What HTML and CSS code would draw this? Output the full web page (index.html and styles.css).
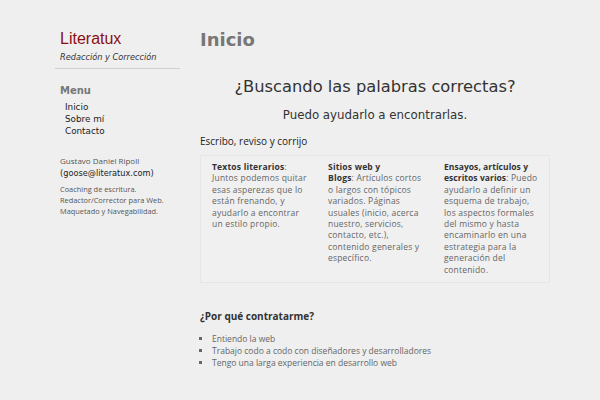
FILE: index.html
```html
<!DOCTYPE html>
<html lang="es">
<head>
<meta charset="utf-8">
<title>Literatux</title>
<link rel="stylesheet" href="styles.css">
</head>
<body>
<div class="page">
  <aside class="sidebar">
    <div class="brand">
      <div class="site-title">Literatux</div>
      <div class="tagline">Redacción y Corrección</div>
    </div>
    <h3 class="menu-title">Menu</h3>
    <ul class="menu">
      <li>Inicio</li>
      <li>Sobre mí</li>
      <li>Contacto</li>
    </ul>
    <div class="author">Gustavo Daniel Ripoll</div>
    <div class="email">(goose@literatux.com)</div>
    <p class="about">Coaching de escritura.<br>Redactor/Corrector para Web.<br>Maquetado y Navegabilidad.</p>
  </aside>
  <main class="main">
    <h1 class="page-title">Inicio</h1>
    <h2 class="lead">¿Buscando las palabras correctas?</h2>
    <p class="sublead">Puedo ayudarlo a encontrarlas.</p>
    <p class="intro">Escribo, reviso y corrijo</p>
    <div class="services">
      <div class="col col-first"><b>Textos literarios</b>: Juntos podemos quitar esas asperezas que lo están frenando, y ayudarlo a encontrar un estilo propio.</div>
      <div class="col col-mid"><b>Sitios web y<br>Blogs</b>: Artículos cortos o largos con tópicos variados. Páginas usuales (inicio, acerca nuestro, servicios, contacto, etc.), contenido generales y específico.</div>
      <div class="col col-last"><b>Ensayos, artículos y escritos varios</b>: Puedo ayudarlo a definir un esquema de trabajo, los aspectos formales del mismo y hasta encaminarlo en una estrategia para la generación del contenido.</div>
    </div>
    <h4 class="why">¿Por qué contratarme?</h4>
    <ul class="reasons">
      <li>Entiendo la web</li>
      <li>Trabajo codo a codo con diseñadores y desarrolladores</li>
      <li>Tengo una larga experiencia en desarrollo web</li>
    </ul>
  </main>
</div>
</body>
</html>
```

FILE: styles.css
```css
html, body {
  margin: 0;
  padding: 0;
  background: #efefef;
}
body {
  font-family: "Open Sans", "DejaVu Sans", sans-serif;
  color: #555;
}
.page {
  display: flex;
  padding: 27px 0 0 55px;
  gap: 20px;
}
.sidebar {
  width: 125px;
  flex: none;
}
.brand {
  padding: 1px 0 4px 5px;
  border-bottom: 1px solid #cfcfcf;
}
.site-title {
  font-family: "Liberation Sans", Arial, sans-serif;
  font-size: 16px;
  color: #8a0f14;
  line-height: 22px;
}
.tagline {
  font-family: "DejaVu Sans", sans-serif;
  font-style: italic;
  font-size: 8.2px;
  color: #333;
  line-height: 14px;
}
.menu-title {
  font-family: "DejaVu Sans", sans-serif;
  font-size: 10px;
  font-weight: bold;
  color: #777;
  margin: 14px 0 2px 5px;
  line-height: 16px;
}
.menu {
  list-style: none;
  margin: 0 0 0 10px;
  padding: 0;
  font-family: "DejaVu Sans", sans-serif;
  font-size: 8.8px;
  line-height: 12px;
  color: #222;
}
.author {
  margin: 18px 0 0 5px;
  font-size: 8px;
  line-height: 12px;
  color: #555;
}
.email {
  margin-left: 5px;
  font-family: "DejaVu Sans", sans-serif;
  font-size: 8.2px;
  line-height: 12px;
  color: #222;
}
.about {
  margin: 5px 0 0 5px;
  font-size: 7.4px;
  line-height: 11px;
  color: #555;
}
.main {
  width: 350px;
  flex: none;
}
.page-title {
  font-family: "DejaVu Sans", sans-serif;
  font-size: 18px;
  font-weight: bold;
  color: #777;
  margin: 0;
  line-height: 26px;
}
.lead {
  font-family: "DejaVu Sans", sans-serif;
  font-weight: normal;
  font-size: 16.3px;
  color: #333;
  text-align: center;
  margin: 22px 0 0;
  line-height: 24px;
}
.sublead {
  font-family: "DejaVu Sans", sans-serif;
  font-size: 11.8px;
  color: #333;
  text-align: center;
  margin: 7px 0 0;
  line-height: 18px;
}
.intro {
  font-size: 10px;
  color: #222;
  margin: 10px 0 0;
  line-height: 14px;
}
.services {
  display: grid;
  grid-template-columns: 116px 116px 1fr;
  margin-top: 7px;
  padding: 5px 5px 7px 11px;
  border: 1px solid #e6e6e6;
  background: #f0f0f0;
  font-size: 8.5px;
  letter-spacing: 0.2px;
  line-height: 11.4px;
  color: #666;
}
.col-first {
  padding-right: 20px;
}
.col-mid {
  padding-right: 15px;
}
.col-last {
  padding-right: 2px;
}
.services b {
  color: #333;
}
.col-last b {
  letter-spacing: 0.05px;
}
.why {
  font-size: 10px;
  font-weight: bold;
  color: #333;
  margin: 26px 0 0;
  line-height: 14px;
}
.reasons {
  margin: 10px 0 0;
  padding-left: 12px;
  list-style: square;
  font-size: 8.5px;
  line-height: 12px;
  color: #666;
}
```
